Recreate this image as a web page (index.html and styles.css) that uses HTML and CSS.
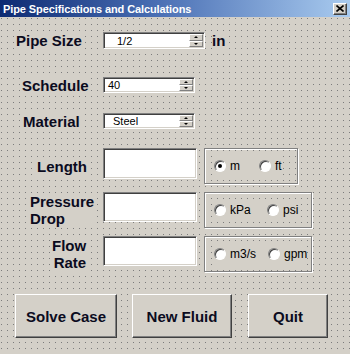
FILE: index.html
```html
<!DOCTYPE html>
<html lang="en">
<head>
    <meta charset="UTF-8">
    <title>Pipe Specifications and Calculations</title>
    <link rel="stylesheet" href="styles.css">
</head>
<body>
    <div class="dialog">
        <div class="titlebar">
            <span class="title">Pipe Specifications and Calculations</span>
            <span class="close">
                <svg width="8" height="7" viewBox="0 0 8 7"><path d="M0.5 0.5 L7.5 6.5 M7.5 0.5 L0.5 6.5" stroke="#000" stroke-width="1.6"/></svg>
            </span>
        </div>

        <div class="form">
            <div class="row row-size">
                <div class="label-cell"><span class="label lbl-size">Pipe Size</span></div>
                <div class="spin spin-wide">
                    <span class="spin-value val-size">1/2</span>
                    <div class="spin-btns">
                        <span class="spin-btn"><i class="arrow up"></i></span>
                        <span class="spin-btn"><i class="arrow down"></i></span>
                    </div>
                </div>
                <span class="unit-in">in</span>
            </div>

            <div class="row row-schedule">
                <div class="label-cell"><span class="label lbl-schedule">Schedule</span></div>
                <div class="spin">
                    <span class="spin-value val-schedule">40</span>
                    <div class="spin-btns">
                        <span class="spin-btn"><i class="arrow up"></i></span>
                        <span class="spin-btn"><i class="arrow down"></i></span>
                    </div>
                </div>
            </div>

            <div class="row row-material">
                <div class="label-cell"><span class="label lbl-material">Material</span></div>
                <div class="spin">
                    <span class="spin-value val-material">Steel</span>
                    <div class="spin-btns">
                        <span class="spin-btn"><i class="arrow up"></i></span>
                        <span class="spin-btn"><i class="arrow down"></i></span>
                    </div>
                </div>
            </div>

            <!-- input rows with unit frames -->
            <div class="row row-input row-length">
                <div class="label-cell"><span class="label lbl-length">Length</span></div>
                <div class="textbox tb-length"></div>
                <div class="frame frame-short">
                    <label class="opt opt-m"><span class="radio checked"></span>m</label>
                    <label class="opt"><span class="radio"></span>ft</label>
                </div>
            </div>

            <div class="row row-input row-pressure">
                <div class="label-cell"><span class="label lbl-pressure">Pressure<br>Drop</span></div>
                <div class="textbox"></div>
                <div class="frame">
                    <label class="opt opt-kpa"><span class="radio"></span>kPa</label>
                    <label class="opt"><span class="radio"></span>psi</label>
                </div>
            </div>

            <div class="row row-input row-flow">
                <div class="label-cell"><span class="label lbl-flow">Flow<br>Rate</span></div>
                <div class="textbox"></div>
                <div class="frame">
                    <label class="opt opt-m3s"><span class="radio"></span>m3/s</label>
                    <label class="opt"><span class="radio"></span>gpm</label>
                </div>
            </div>

            <div class="buttons">
                <button class="btn btn-solve">Solve Case</button>
                <button class="btn btn-fluid">New Fluid</button>
                <button class="btn btn-quit">Quit</button>
            </div>
        </div>
    </div>
</body>
</html>
```

FILE: styles.css
```css
body {
    margin: 0;
    font-family: "Liberation Sans", Arial, sans-serif;
}

/* form surface with the design-time dot grid */
.dialog {
    width: 350px;
    height: 354px;
    overflow: hidden;
    background-color: #d4d0c8;
    background-image:
        linear-gradient(90deg, #d4d0c8 5px, transparent 5px),
        linear-gradient(#d4d0c8 5px, #7c7c7c 5px);
    background-size: 6px 6px;
    background-position: 2px 1px;
}

.titlebar {
    height: 17px;
    display: flex;
    align-items: center;
    justify-content: space-between;
    padding: 0 3px 0 3px;
    background: linear-gradient(90deg, #0d2a72 0%, #4a6fb4 45%, #a9cbef 100%);
}

.title {
    color: #fff;
    font-size: 11px;
    font-weight: bold;
    letter-spacing: -0.1px;
}

.close {
    width: 14px;
    height: 12px;
    box-sizing: border-box;
    display: flex;
    align-items: center;
    justify-content: center;
    background: #d4d0c8;
    border: 1px solid;
    border-color: #fff #404040 #404040 #fff;
    box-shadow: inset -1px -1px #808080;
}

.row {
    display: flex;
    align-items: center;
}

.row-size { margin-top: 15px; height: 17px; }
.row-schedule { margin-top: 28px; height: 16px; }
.row-material { margin-top: 20px; height: 16px; }
.row-length { margin-top: 19px; }
.row-pressure { margin-top: 8px; }
.row-flow { margin-top: 8px; }

.row-input {
    align-items: flex-start;
    height: 36px;
}

.label-cell {
    width: 103px;
    height: 100%;
    display: flex;
    align-items: center;
}

.label {
    background: #d4d0c8;
    color: #0b0b1e;
    font-size: 15px;
    font-weight: bold;
    line-height: 17px;
    padding: 0 2px;
}

.lbl-size { margin-left: 14px; }
.lbl-schedule { margin-left: 20px; }
.lbl-material { margin-left: 21px; }
.lbl-length { margin-left: 35px; }
.lbl-pressure { margin-left: 28px; }
.lbl-flow { margin-left: 50px; text-align: right; }

/* sunken fields */
.spin,
.textbox {
    box-sizing: border-box;
    background: #fff;
    border: 1px solid;
    border-color: #808080 #fff #fff #808080;
    box-shadow: inset 1px 1px #404040, inset -1px -1px #d4d0c8;
}

.spin {
    width: 92px;
    height: 16px;
    display: flex;
    align-items: center;
    justify-content: space-between;
}

.spin-wide {
    width: 102px;
    height: 17px;
}

.spin-value {
    font-size: 11px;
    color: #000;
}

.val-size { margin-left: 13px; }
.val-schedule { margin-left: 4px; }
.val-material { margin-left: 9px; }

.spin-btns {
    display: flex;
    flex-direction: column;
    align-self: stretch;
    width: 14px;
    margin: 1px 1px 1px 0;
}

.spin-btn {
    flex: 1;
    display: flex;
    align-items: center;
    justify-content: center;
    background: #d4d0c8;
    border: 1px solid;
    border-color: #fff #808080 #808080 #fff;
}

.arrow {
    width: 0;
    height: 0;
    border-left: 2px solid transparent;
    border-right: 2px solid transparent;
}

.arrow.up { border-bottom: 2px solid #000; }
.arrow.down { border-top: 2px solid #000; }

.unit-in {
    margin-left: 7px;
    font-size: 15px;
    font-weight: bold;
    color: #0b0b1e;
    background: #d4d0c8;
}

.textbox {
    width: 94px;
    height: 31px;
}

.row-pressure .textbox,
.row-flow .textbox {
    height: 30px;
}

/* option frames */
.frame {
    box-sizing: border-box;
    width: 108px;
    height: 36px;
    margin-left: 7px;
    padding-left: 9px;
    display: flex;
    align-items: center;
    border: 1px solid #808080;
    box-shadow: inset 1px 1px #fff, 1px 1px #fff;
}

.frame-short { width: 94px; }

.opt {
    display: flex;
    align-items: center;
    gap: 4px;
    height: 22px;
    background: #d4d0c8;
    font-size: 12px;
    color: #000;
}

.opt-m { width: 45px; }
.opt-kpa { width: 53px; }
.opt-m3s { width: 54px; }

.radio {
    box-sizing: border-box;
    width: 12px;
    height: 12px;
    border-radius: 50%;
    background: #fff;
    border: 1px solid;
    border-color: #808080 #fff #fff #808080;
    box-shadow: inset 1px 1px #404040;
    display: flex;
    align-items: center;
    justify-content: center;
}

.radio.checked::after {
    content: '';
    width: 4px;
    height: 4px;
    border-radius: 50%;
    background: #000;
}

/* command buttons */
.buttons {
    display: flex;
    margin-top: 22px;
    padding-left: 15px;
    gap: 15px;
}

.btn {
    box-sizing: border-box;
    height: 44px;
    background: #d4d0c8;
    border: 1px solid;
    border-color: #fff #404040 #404040 #fff;
    box-shadow: inset -1px -1px #808080;
    font-family: "Liberation Sans", Arial, sans-serif;
    font-size: 15px;
    font-weight: bold;
    color: #0b0b1e;
    padding: 0;
}

.btn-solve { width: 102px; }
.btn-fluid { width: 100px; }
.btn-quit { width: 80px; margin-left: 1px; }
```
